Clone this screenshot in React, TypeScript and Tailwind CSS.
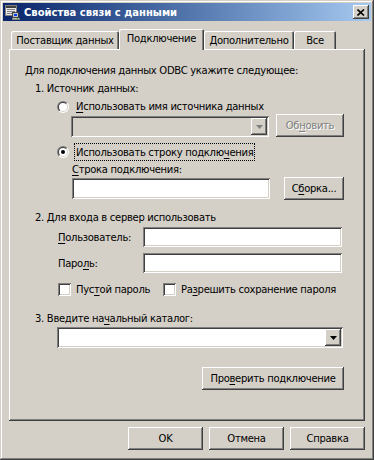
import React from "react";

const RAISED =
  "shadow-[inset_-1px_-1px_#404040,inset_1px_1px_#ffffff,inset_-2px_-2px_#808080,inset_2px_2px_#d4d0c8]";
const SUNKEN =
  "shadow-[inset_1px_1px_#808080,inset_-1px_-1px_#ffffff,inset_2px_2px_#404040,inset_-2px_-2px_#d4d0c8]";

function U({ children }: { children: React.ReactNode }) {
  return <span className="underline underline-offset-[2px] decoration-1">{children}</span>;
}

function Btn({
  children,
  className = "",
  disabled = false,
}: {
  children: React.ReactNode;
  className?: string;
  disabled?: boolean;
}) {
  return (
    <div
      className={`h-[23px] flex items-center justify-center bg-[#d4d0c8] ${RAISED} ${
        disabled ? "text-[#808080] [text-shadow:1px_1px_0_#ffffff]" : "text-black"
      } ${className}`}
    >
      <span>{children}</span>
    </div>
  );
}

function Arrow({ color = "#000000" }: { color?: string }) {
  return (
    <svg width="7" height="4" viewBox="0 0 7 4">
      <path d="M0 0H7L3.5 4Z" fill={color} />
    </svg>
  );
}

function Combo({ className = "", disabled = false }: { className?: string; disabled?: boolean }) {
  return (
    <div
      className={`h-[21px] flex items-stretch justify-end p-[2px] ${SUNKEN} ${
        disabled ? "bg-[#d4d0c8]" : "bg-white"
      } ${className}`}
    >
      <div className={`w-[16px] flex items-center justify-center bg-[#d4d0c8] ${RAISED}`}>
        <Arrow color={disabled ? "#808080" : "#000000"} />
      </div>
    </div>
  );
}

function Field({ className = "" }: { className?: string }) {
  return <div className={`bg-white ${SUNKEN} ${className}`} />;
}

function Radio({ checked = false }: { checked?: boolean }) {
  return (
    <svg width="12" height="12" viewBox="0 0 12 12" className="shrink-0">
      <defs>
        <linearGradient id="rgo" x1="0" y1="0" x2="1" y2="1">
          <stop offset="0.5" stopColor="#808080" />
          <stop offset="0.5" stopColor="#ffffff" />
        </linearGradient>
        <linearGradient id="rgi" x1="0" y1="0" x2="1" y2="1">
          <stop offset="0.5" stopColor="#404040" />
          <stop offset="0.5" stopColor="#d4d0c8" />
        </linearGradient>
      </defs>
      <circle cx="6" cy="6" r="6" fill="url(#rgo)" />
      <circle cx="6" cy="6" r="5" fill="url(#rgi)" />
      <circle cx="6" cy="6" r="4" fill="#ffffff" />
      {checked && <circle cx="6" cy="6" r="2" fill="#000000" />}
    </svg>
  );
}

function Check() {
  return <div className={`w-[13px] h-[13px] shrink-0 bg-white ${SUNKEN}`} />;
}

function TitleIcon() {
  return (
    <svg width="16" height="16" viewBox="0 0 16 16" className="shrink-0">
      <rect x="1.5" y="1.5" width="11" height="10" fill="#e8e8e8" stroke="#808080" />
      <rect x="2" y="2" width="10" height="2" fill="#404040" />
      <path d="M3 5.5H11M3 7.5H11M3 9.5H9" stroke="#808080" strokeWidth="1" />
      <rect x="8.5" y="8.5" width="6" height="5" fill="#c0c0c0" stroke="#404040" />
      <rect x="10" y="10" width="3" height="2" fill="#0040ff" />
      <rect x="8" y="14" width="8" height="2" fill="#808080" />
      <rect x="9" y="14" width="6" height="1" fill="#c0c0c0" />
      <rect x="13" y="14" width="1" height="1" fill="#00c000" />
    </svg>
  );
}

function Tab({
  label,
  w,
  selected = false,
}: {
  label: string;
  w: string;
  selected?: boolean;
}) {
  return (
    <div
      className={`${w} ${
        selected ? "h-[21px] -mb-[1px] relative z-10" : "h-[18px]"
      } bg-[#d4d0c8] rounded-t-[2px] shadow-[inset_1px_1px_#ffffff,inset_-1px_0_#404040,inset_-2px_0_#808080] flex justify-center pt-[3px] whitespace-nowrap`}
    >
      {label}
    </div>
  );
}

export default function App() {
  return (
    <div className="w-[374px] h-[460px] bg-[#d4d0c8] p-[3px] flex flex-col shadow-[inset_-1px_-1px_#404040,inset_1px_1px_#d4d0c8,inset_-2px_-2px_#808080,inset_2px_2px_#ffffff] font-['DejaVu_Sans',sans-serif] text-[10px] leading-[13px] tracking-[-0.3px] text-black overflow-hidden">
      {/* Title bar */}
      <div className="h-[18px] shrink-0 flex items-center bg-gradient-to-r from-[#0a246a] to-[#a6caf0]">
        <div className="ml-[1px]">
          <TitleIcon />
        </div>
        <div className="ml-[4px] text-white font-bold tracking-normal whitespace-nowrap">
          Свойства связи с данными
        </div>
        <div
          className={`ml-auto mr-[2px] w-[16px] h-[14px] bg-[#d4d0c8] ${RAISED} flex items-center justify-center`}
        >
          <svg width="8" height="7" viewBox="0 0 8 7">
            <path d="M0.5 0.5L7 6.5M7 0.5L0.5 6.5" stroke="#000000" strokeWidth="1.6" />
          </svg>
        </div>
      </div>

      {/* Tabs */}
      <div className="mt-[8px] mx-[6px] pl-[2px] h-[20px] flex items-end shrink-0">
        <Tab label="Поставщик данных" w="w-[108px]" />
        <Tab label="Подключение" w="w-[85px]" selected />
        <Tab label="Дополнительно" w="w-[90px]" />
        <Tab label="Все" w="w-[42px]" />
      </div>

      {/* Panel */}
      <div className="mx-[6px] h-[372px] shrink-0 bg-[#d4d0c8] shadow-[inset_-1px_-1px_#404040,inset_1px_1px_#ffffff,inset_-2px_-2px_#808080] flex flex-col pt-[15px]">
        <div className="pl-[16px] h-[13px] whitespace-nowrap">Для подключения данных ODBC укажите следующее:</div>
        <div className="mt-[5px] pl-[26px] h-[13px] whitespace-nowrap">1. Источник данных:</div>

        <div className="mt-[5px] h-[13px] flex items-center pl-[48px]">
          <Radio />
          <div className="ml-[5px] border border-transparent px-[1px] whitespace-nowrap leading-[14px]">
            <U>И</U>спользовать имя источника данных
          </div>
        </div>

        <div className="mt-[1px] h-[23px] flex items-end pl-[62px]">
          <Combo className="w-[198px]" disabled />
          <Btn className="ml-[7px] w-[68px]" disabled>
            Об<U>н</U>овить
          </Btn>
        </div>

        <div className="mt-[6px] h-[18px] flex items-center pl-[48px]">
          <Radio checked />
          <div className="ml-[5px] h-[18px] flex items-center border border-dotted border-black px-[1px] whitespace-nowrap">
            Использовать строку подклю<U>ч</U>ения
          </div>
        </div>

        <div className="mt-[2px] pl-[63px] h-[13px] whitespace-nowrap">
          <U>С</U>трока подключения:
        </div>

        <div className="mt-[1px] h-[23px] flex items-center pl-[63px]">
          <Field className="w-[198px] h-[21px]" />
          <Btn className="ml-[14px] w-[60px]">
            С<U>б</U>орка...
          </Btn>
        </div>

        <div className="mt-[11px] pl-[26px] h-[13px] whitespace-nowrap">2. Для входа в сервер использовать</div>

        <div className="mt-[3px] h-[20px] flex items-center pl-[49px]">
          <div className="w-[85px] whitespace-nowrap">
            <U>П</U>ользователь:
          </div>
          <Field className="w-[199px] h-[20px]" />
        </div>

        <div className="mt-[6px] h-[20px] flex items-center pl-[49px]">
          <div className="w-[85px] whitespace-nowrap">
            Паро<U>л</U>ь:
          </div>
          <Field className="w-[199px] h-[20px]" />
        </div>

        <div className="mt-[10px] h-[13px] flex items-center pl-[49px]">
          <div className="w-[105px] flex items-center">
            <Check />
            <div className="ml-[5px] whitespace-nowrap">
              Пус<U>т</U>ой пароль
            </div>
          </div>
          <Check />
          <div className="ml-[5px] whitespace-nowrap">
            Ра<U>з</U>решить сохранение пароля
          </div>
        </div>

        <div className="mt-[16px] pl-[26px] h-[13px] whitespace-nowrap">
          3. Введите на<U>ч</U>альный каталог:
        </div>

        <div className="mt-[2px] pl-[48px]">
          <Combo className="w-[286px]" />
        </div>

        <div className="mt-[19px] pl-[193px]">
          <Btn className="w-[142px]">
            Про<U>в</U>ерить подключение
          </Btn>
        </div>
      </div>

      {/* Bottom buttons */}
      <div className="mt-[6px] flex justify-end gap-[6px] pr-[6px]">
        <Btn className="w-[75px]">OK</Btn>
        <Btn className="w-[75px]">Отмена</Btn>
        <Btn className="w-[75px]">Справка</Btn>
      </div>
    </div>
  );
}
